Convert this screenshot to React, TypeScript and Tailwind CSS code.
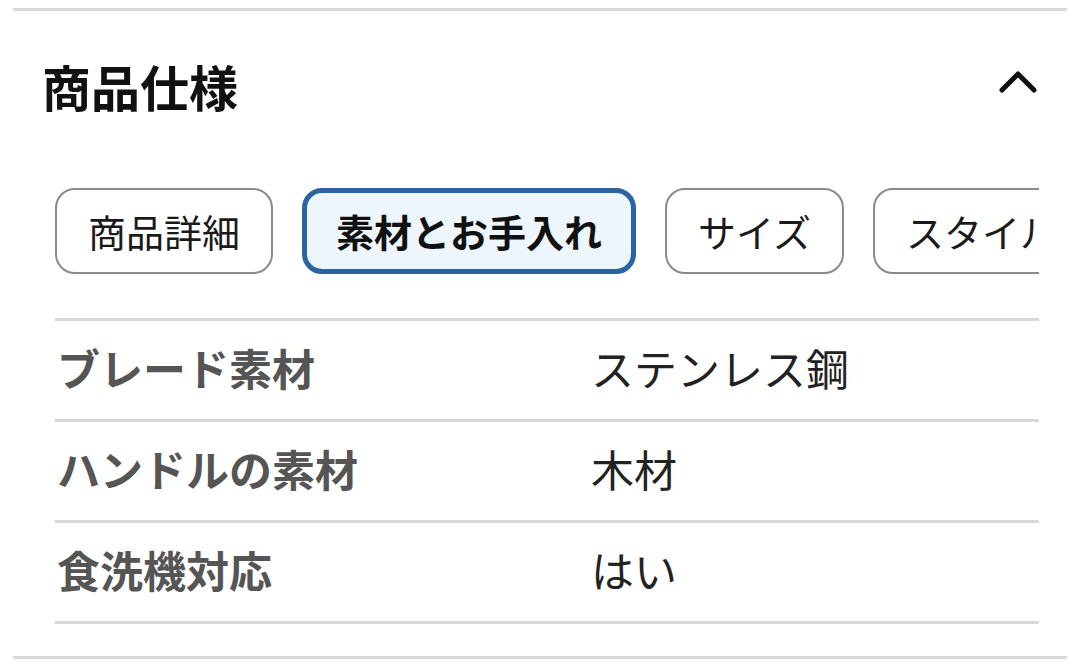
import React from "react";

const tabs = [
  { label: "商品詳細", active: false },
  { label: "素材とお手入れ", active: true },
  { label: "サイズ", active: false },
  { label: "スタイル", active: false },
];

const rows = [
  { k: "ブレード素材", v: "ステンレス鋼" },
  { k: "ハンドルの素材", v: "木材" },
  { k: "食洗機対応", v: "はい" },
];

export default function App() {
  return (
    <div className="w-[1080px] h-[667px] bg-white overflow-hidden font-['Noto_Sans_CJK_JP','Noto_Sans',sans-serif]">
      <div className="px-[13px] pt-[8px]">
        <div className="h-[3px] bg-[#dadada]" />
        <div className="mt-[49px] flex items-center justify-between pl-[29px] pr-[29px] h-[53px]">
          <h2 className="text-[49px] leading-none font-bold text-[#111] mb-[3px]">商品仕様</h2>
          <svg width="40" height="26" viewBox="0 0 40 26" className="mb-[12px]" fill="none">
            <polyline points="4,22 20,6 36,22" stroke="#111" strokeWidth="5" strokeLinecap="round" strokeLinejoin="round" />
          </svg>
        </div>
        <div className="pl-[42px] pr-[28px]">
          <div className="mt-[75px] flex gap-[29px] overflow-hidden">
            {tabs.map((t) =>
              t.active ? (
                <div
                  key={t.label}
                  className="h-[86px] shrink-0 flex items-center px-[29px] rounded-[20px] border-[5px] border-[#2b64a1] bg-[#eef6fd] text-[38px] font-bold text-[#111] leading-none"
                >
                  {t.label}
                </div>
              ) : (
                <div
                  key={t.label}
                  className="h-[86px] shrink-0 flex items-center px-[31px] rounded-[20px] border-2 border-[#8a8a8a] bg-white text-[38px] text-[#1a1a1a] leading-none"
                >
                  {t.label}
                </div>
              )
            )}
          </div>
          <div className="mt-[44px] border-b-[3px] border-[#d8d8d8]">
            {rows.map((r) => (
              <div
                key={r.k}
                className="grid grid-cols-[536px_1fr] items-center h-[101px] border-t-[3px] border-[#d8d8d8] pb-[5px]"
              >
                <div className="pl-[2px] text-[43px] font-bold text-[#555] leading-none">{r.k}</div>
                <div className="text-[43px] text-[#222] leading-none">{r.v}</div>
              </div>
            ))}
          </div>
        </div>
        <div className="mt-[32px] h-[3px] bg-[#dadada]" />
      </div>
    </div>
  );
}
